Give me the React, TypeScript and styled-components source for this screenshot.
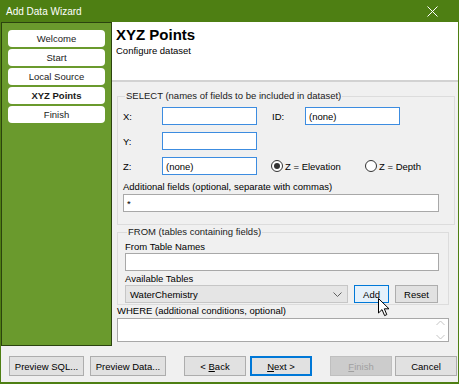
import styled, { createGlobalStyle } from 'styled-components';

const GlobalStyle = createGlobalStyle`
    html, body {
        margin: 0;
        padding: 0;
        background: #ffffff;
    }
    * {
        box-sizing: border-box;
    }
`;

const steps = ['Welcome', 'Start', 'Local Source', 'XYZ Points', 'Finish'];

function Cursor() {
    return (
        <CursorIcon width="12" height="19" viewBox="0 0 12 19">
            <path
                d="M0.5 0.5 L0.5 15 L4 11.6 L6.6 17.6 L8.8 16.6 L6.3 10.8 L11 10.8 Z"
                fill="#ffffff"
                stroke="#000000"
                strokeWidth="1"
                strokeLinejoin="miter"
            />
        </CursorIcon>
    );
}

export default function App() {
    return (
        <>
            <GlobalStyle />
            <Window>
                <TitleBar>
                    <span>Add Data Wizard</span>
                    <CloseIcon width="11" height="11" viewBox="0 0 11 11">
                        <path d="M0.5 0.5 L10.5 10.5 M10.5 0.5 L0.5 10.5" stroke="#ffffff" strokeWidth="1" />
                    </CloseIcon>
                </TitleBar>
                <Body>
                    <Sidebar>
                        {steps.map((s) => (
                            <StepButton key={s} $active={s === 'XYZ Points'}>{s}</StepButton>
                        ))}
                    </Sidebar>
                    <Main>
                        <Header>
                            <HeaderTitle>XYZ Points</HeaderTitle>
                            <HeaderSub>Configure dataset</HeaderSub>
                        </Header>
                        <Content>
                            <SelectGroup>
                                <Legend>SELECT (names of fields to be included in dataset)</Legend>
                                <FieldRow>
                                    <FieldLabel>X:</FieldLabel>
                                    <TextBox />
                                    <IdLabel>ID:</IdLabel>
                                    <TextBox>(none)</TextBox>
                                </FieldRow>
                                <FieldRow>
                                    <FieldLabel>Y:</FieldLabel>
                                    <TextBox />
                                </FieldRow>
                                <FieldRow>
                                    <FieldLabel>Z:</FieldLabel>
                                    <TextBox>(none)</TextBox>
                                    <RadioOption>
                                        <Radio $checked />
                                        Z = Elevation
                                    </RadioOption>
                                    <RadioOption>
                                        <Radio />
                                        Z = Depth
                                    </RadioOption>
                                </FieldRow>
                                <SmallLabel>Additional fields (optional, separate with commas)</SmallLabel>
                                <WideBox $width={316}>*</WideBox>
                            </SelectGroup>
                            <FromGroup>
                                <Legend>FROM (tables containing fields)</Legend>
                                <SmallLabel $tight>From Table Names</SmallLabel>
                                <WideBox $width={314} $tight />
                                <SmallLabel $tight>Available Tables</SmallLabel>
                                <TableRow>
                                    <Combo>
                                        WaterChemistry
                                        <svg width="9" height="5" viewBox="0 0 9 5">
                                            <path d="M0.5 0.5 L4.5 4.5 L8.5 0.5" fill="none" stroke="#606060" strokeWidth="1" />
                                        </svg>
                                    </Combo>
                                    <SmallButton $hover>Add</SmallButton>
                                    <SmallButton>Reset</SmallButton>
                                    <Cursor />
                                </TableRow>
                            </FromGroup>
                            <WhereLabel>WHERE (additional conditions, optional)</WhereLabel>
                            <WhereBox>
                                <ScrollArrows width="9" height="20" viewBox="0 0 9 20">
                                    <path d="M0.5 5 L4.5 1 L8.5 5 M0.5 15 L4.5 19 L8.5 15" fill="none" stroke="#c4c4c4" strokeWidth="1" />
                                </ScrollArrows>
                            </WhereBox>
                        </Content>
                    </Main>
                </Body>
                <Footer>
                    <ButtonGroup $gap={6}>
                        <WizardButton $width={75}>Preview SQL...</WizardButton>
                        <WizardButton $width={76}>Preview Data...</WizardButton>
                    </ButtonGroup>
                    <ButtonGroup $gap={4}>
                        <WizardButton $width={62}>&lt; <u>B</u>ack</WizardButton>
                        <WizardButton $width={62} $default><u>N</u>ext &gt;</WizardButton>
                    </ButtonGroup>
                    <ButtonGroup $gap={3}>
                        <WizardButton $width={62} disabled><u>F</u>inish</WizardButton>
                        <WizardButton $width={62}>Cancel</WizardButton>
                    </ButtonGroup>
                </Footer>
            </Window>
        </>
    );
}

const font = `"Liberation Sans", Arial, sans-serif`;

const Window = styled.div`
    width: 459px;
    height: 384px;
    display: flex;
    flex-direction: column;
    background: #4e7f13;
    padding: 0 1px 2px 1px;
    font-family: ${font};
    font-size: 9.5px;
    color: #000000;
`;

const TitleBar = styled.div`
    height: 22px;
    flex-shrink: 0;
    display: flex;
    align-items: center;
    justify-content: space-between;
    padding: 0 20px 0 5px;
    color: #ffffff;
    font-size: 10px;
`;

const CloseIcon = styled.svg`
    display: block;
`;

const Body = styled.div`
    display: flex;
    height: 324px;
    flex-shrink: 0;
    background: #f0f0f0;
`;

const Sidebar = styled.div`
    width: 111px;
    flex-shrink: 0;
    background: #6a9a2d;
    border: 1px solid #2b430f;
    padding: 7px 6px;
    display: flex;
    flex-direction: column;
    gap: 2px;
`;

const StepButton = styled.div<{ $active?: boolean }>`
    height: 17px;
    background: #ffffff;
    border-radius: 4px;
    display: flex;
    align-items: center;
    justify-content: center;
    font-weight: ${({ $active }) => ($active ? 700 : 400)};
    color: #1a1a1a;
`;

const Main = styled.div`
    flex: 1;
    display: flex;
    flex-direction: column;
    min-width: 0;
`;

const Header = styled.div`
    height: 60px;
    flex-shrink: 0;
    background: #ffffff;
    border-bottom: 2px solid #d2d2d2;
    padding: 4px 4px;
`;

const HeaderTitle = styled.div`
    font-size: 15px;
    font-weight: 700;
    line-height: 18px;
`;

const HeaderSub = styled.div`
    line-height: 13px;
`;

const Content = styled.div`
    flex: 1;
    padding: 8px 9px 0 5px;
    display: flex;
    flex-direction: column;
`;

const GroupBase = styled.fieldset`
    margin: 0;
    border: 1px solid #dcdcdc;
    display: flex;
    flex-direction: column;
`;

const SelectGroup = styled(GroupBase)`
    padding: 5px 9px 5px 5px;
`;

const FromGroup = styled(GroupBase)`
    margin-top: 1px;
    padding: 4px 9px 0 7px;
`;

const Legend = styled.legend`
    padding: 0 1px;
    margin-left: 2px;
    line-height: 12px;
    color: #1a1a1a;
`;

const FieldRow = styled.div`
    display: flex;
    align-items: center;
    height: 18px;
    margin-bottom: 7px;
`;

const FieldLabel = styled.span`
    width: 39px;
`;

const IdLabel = styled.span`
    width: 33px;
    margin-left: 15px;
`;

const TextBox = styled.div`
    width: 95px;
    height: 18px;
    background: #ffffff;
    border: 1px solid #3c8ce0;
    padding: 0 3px;
    display: flex;
    align-items: center;
`;

const RadioOption = styled.label`
    display: flex;
    align-items: center;
    gap: 2px;
    margin-left: 14px;
    width: 80px;
`;

const Radio = styled.span<{ $checked?: boolean }>`
    width: 12px;
    height: 12px;
    border-radius: 50%;
    border: 1px solid #333333;
    background: #ffffff;
    position: relative;
    &::after {
        content: '';
        display: ${({ $checked }) => ($checked ? 'block' : 'none')};
        position: absolute;
        left: 2px;
        top: 2px;
        width: 6px;
        height: 6px;
        border-radius: 50%;
        background: #333333;
    }
`;

const SmallLabel = styled.div<{ $tight?: boolean }>`
    line-height: 12px;
    margin-top: -1px;
    margin-bottom: ${({ $tight }) => ($tight ? 0 : 1)}px;
`;

const WideBox = styled.div<{ $width: number; $tight?: boolean }>`
    width: ${({ $width }) => $width}px;
    height: 18px;
    background: #ffffff;
    border: 1px solid #a8a8a8;
    padding: 0 3px;
    display: flex;
    align-items: center;
    margin-bottom: ${({ $tight }) => ($tight ? 3 : 7)}px;
`;

const TableRow = styled.div`
    display: flex;
    align-items: center;
    gap: 6px;
    position: relative;
    margin-bottom: 1px;
`;

const Combo = styled.div`
    width: 223px;
    height: 18px;
    background: #e5e5e5;
    border: 1px solid #c6c6c6;
    padding: 0 5px 0 4px;
    display: flex;
    align-items: center;
    justify-content: space-between;
`;

const SmallButton = styled.div<{ $hover?: boolean }>`
    height: 18px;
    width: ${({ $hover }) => ($hover ? '35px' : '43px')};
    background: ${({ $hover }) => ($hover ? '#e5f1fb' : '#e1e1e1')};
    border: 1px solid ${({ $hover }) => ($hover ? '#0078d7' : '#adadad')};
    display: flex;
    align-items: center;
    justify-content: center;
`;

const CursorIcon = styled.svg`
    position: absolute;
    left: 253px;
    top: 13px;
`;

const WhereLabel = styled.div`
    line-height: 12px;
`;

const WhereBox = styled.div`
    height: 24px;
    margin-top: 1px;
    background: #ffffff;
    border: 1px solid #a8a8a8;
    display: flex;
    justify-content: flex-end;
    align-items: center;
    padding-right: 3px;
`;

const ScrollArrows = styled.svg`
    display: block;
`;

const Footer = styled.div`
    flex: 1;
    background: #f0f0f0;
    display: flex;
    align-items: center;
    padding: 4px 7px 0 8px;
    gap: 18px;
`;

const ButtonGroup = styled.div<{ $gap?: number }>`
    display: flex;
    gap: ${({ $gap }) => ($gap ?? 5)}px;
    &:last-child {
        margin-left: auto;
    }
`;

const WizardButton = styled.button<{ $width: number; $default?: boolean }>`
    width: ${({ $width }) => $width}px;
    height: 20px;
    font-family: ${font};
    font-size: 9.5px;
    padding: 0;
    color: #000000;
    background: #e1e1e1;
    border: ${({ $default }) => ($default ? '2px solid #0078d7' : '1px solid #adadad')};
    &:disabled {
        background: #cccccc;
        border-color: #bfbfbf;
        color: #a0a0a0;
    }
`;
